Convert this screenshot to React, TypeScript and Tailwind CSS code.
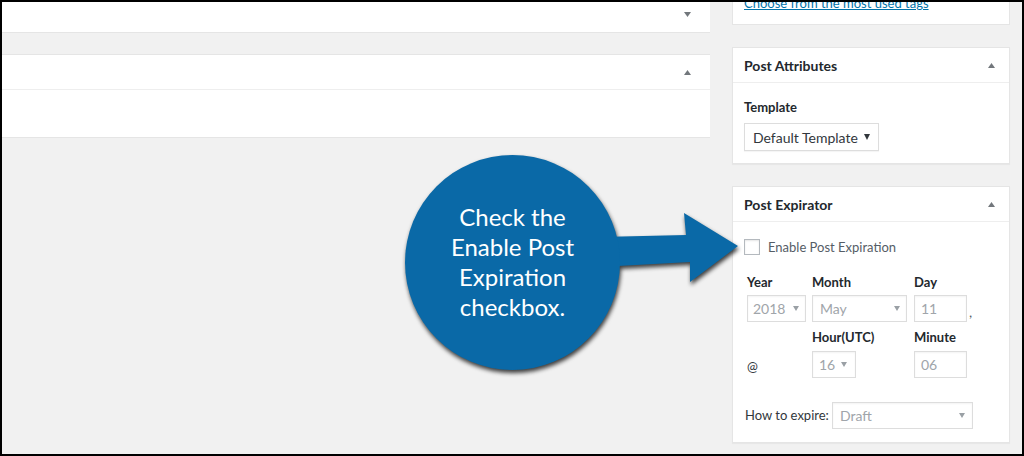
import type { ReactNode } from "react"

function Tri({ up, color = "#72777c" }: { up?: boolean; color?: string }) {
  return (
    <svg width="7" height="5" viewBox="0 0 7 5" className="shrink-0">
      <path d={up ? "M0 5L3.5 0L7 5Z" : "M0 0L7 0L3.5 5Z"} fill={color} />
    </svg>
  )
}

function Box({ title, children }: { title: string; children: ReactNode }) {
  return (
    <div className="bg-white border border-[#e5e5e5] shadow-[0_1px_1px_rgba(0,0,0,0.04)]">
      <div className="h-[35px] flex items-center justify-between pl-[11px] pr-[14px] border-b border-[#eeeeee]">
        <h2 className="text-[14px] font-bold text-[#23282d]">{title}</h2>
        <Tri up />
      </div>
      <div className="px-[11px]">{children}</div>
    </div>
  )
}

function Select({
  value,
  className,
}: {
  value: string
  className: string
}) {
  return (
    <div
      className={
        "h-[27px] flex items-center justify-between bg-white border border-[#dddddd] shadow-[inset_0_1px_2px_rgba(0,0,0,0.05)] text-[14px] " +
        className
      }
    >
      <span className="text-[#a0a5aa]">{value}</span>
      <svg width="6" height="5" viewBox="0 0 6 5">
        <path d="M0 0L6 0L3 5Z" fill="#9aa0a5" />
      </svg>
    </div>
  )
}

function Input({ value }: { value: string }) {
  return (
    <div className="w-[53px] h-[27px] flex items-center pl-[6px] bg-white border border-[#dddddd] shadow-[inset_0_1px_2px_rgba(0,0,0,0.05)] text-[14px] text-[#a0a5aa]">
      {value}
    </div>
  )
}

export default function App() {
  return (
    <div className="w-[1024px] h-[456px] bg-black p-[2px] font-['Lato','Liberation_Sans',sans-serif]">
      <div className="relative w-full h-full bg-[#f1f1f1] overflow-hidden flex">
        {/* left editor column */}
        <div className="w-[708px] flex flex-col">
          <div className="h-[31px] bg-white border-b border-[#e5e5e5] flex justify-end pt-[10px] pr-[19px]">
            <Tri />
          </div>
          <div className="mt-[21px] bg-white border-y border-[#e5e5e5]">
            <div className="h-[35px] border-b border-[#eeeeee] flex items-center justify-end pr-[19px]">
              <Tri up />
            </div>
            <div className="h-[47px]" />
          </div>
        </div>

        {/* sidebar */}
        <div className="ml-[22px] w-[278px] flex flex-col gap-[22px]">
          <div className="h-[23px] bg-white border-x border-b border-[#e5e5e5] px-[11px]">
            <a className="block -mt-[8px] leading-[18px] text-[13px] text-[#0073aa] underline">
              Choose from the most used tags
            </a>
          </div>

          <Box title="Post Attributes">
            <p className="pt-[15px] leading-[18px] text-[13px] font-bold text-[#23282d]">Template</p>
            <div className="mt-[7px] mb-[12px] w-[135px] h-[28px] pl-[8px] pr-[8px] flex items-center justify-between border border-[#dddddd] shadow-[0_1px_1px_rgba(0,0,0,0.04)] text-[14px] text-[#32373c]">
              <span>Default Template</span>
              <svg width="6" height="6" viewBox="0 0 6 6">
                <path d="M0 0L6 0L3 6Z" fill="#32373c" />
              </svg>
            </div>
          </Box>

          <Box title="Post Expirator">
            <div className="mt-[17px] h-[16px] flex items-center">
              <span className="w-[16px] h-[16px] border border-[#b4b9be] bg-white shadow-[inset_0_1px_2px_rgba(0,0,0,0.1)]" />
              <span className="ml-[8px] leading-[16px] text-[13px] text-[#555d66]">Enable Post Expiration</span>
            </div>

            <div className="mt-[18px] pl-[3px] grid grid-cols-[65px_102px_1fr] text-[13px] font-bold text-[#23282d]">
              <span className="leading-[18px]">Year</span>
              <span className="leading-[18px]">Month</span>
              <span className="leading-[18px]">Day</span>

              <div className="mt-[4px] font-normal">
                <Select value="2018" className="w-[59px] pl-[5px] pr-[6px]" />
              </div>
              <div className="mt-[4px] font-normal">
                <Select value="May" className="w-[95px] pl-[7px] pr-[6px]" />
              </div>
              <div className="mt-[4px] font-normal flex items-end">
                <Input value="11" />
                <span className="ml-[2px] mb-[3px] text-[14px] leading-[14px] text-[#555d66]">,</span>
              </div>

              <span />
              <span className="mt-[6px] leading-[18px]">Hour(UTC)</span>
              <span className="mt-[6px] leading-[18px]">Minute</span>

              <span className="mt-[5px] pt-[5px] font-normal text-[#32373c] flex items-center">@</span>
              <div className="mt-[5px] font-normal">
                <Select value="16" className="w-[44px] pl-[6px] pr-[8px]" />
              </div>
              <div className="mt-[5px] font-normal">
                <Input value="06" />
              </div>
            </div>

            <div className="mt-[24px] mb-[13px] pl-[1px] flex items-center">
              <span className="w-[87px] text-[13px] text-[#32373c]">How to expire:</span>
              <Select value="Draft" className="w-[141px] pl-[7px] pr-[7px]" />
            </div>
          </Box>
        </div>

        {/* callout */}
        <svg
          className="absolute -left-[2px] -top-[2px] pointer-events-none drop-shadow-[1px_3px_2px_rgba(0,0,0,0.75)]"
          width="1024"
          height="456"
          viewBox="0 0 1024 456"
        >
          <path
            d="M600 237L686 235L684 213L738 246L690 282L690 262L600 267Z"
            fill="#0a69a7"
          />
          <circle cx="512.5" cy="262.5" r="107.5" fill="#0a69a7" />
        </svg>
        <div className="absolute left-[403px] top-[152px] w-[215px] h-[215px] flex flex-col items-center justify-center text-white text-[24px] leading-[30px] text-center pointer-events-none">
          <span>Check the</span>
          <span>Enable Post</span>
          <span>Expiration</span>
          <span>checkbox.</span>
        </div>
      </div>
    </div>
  )
}
